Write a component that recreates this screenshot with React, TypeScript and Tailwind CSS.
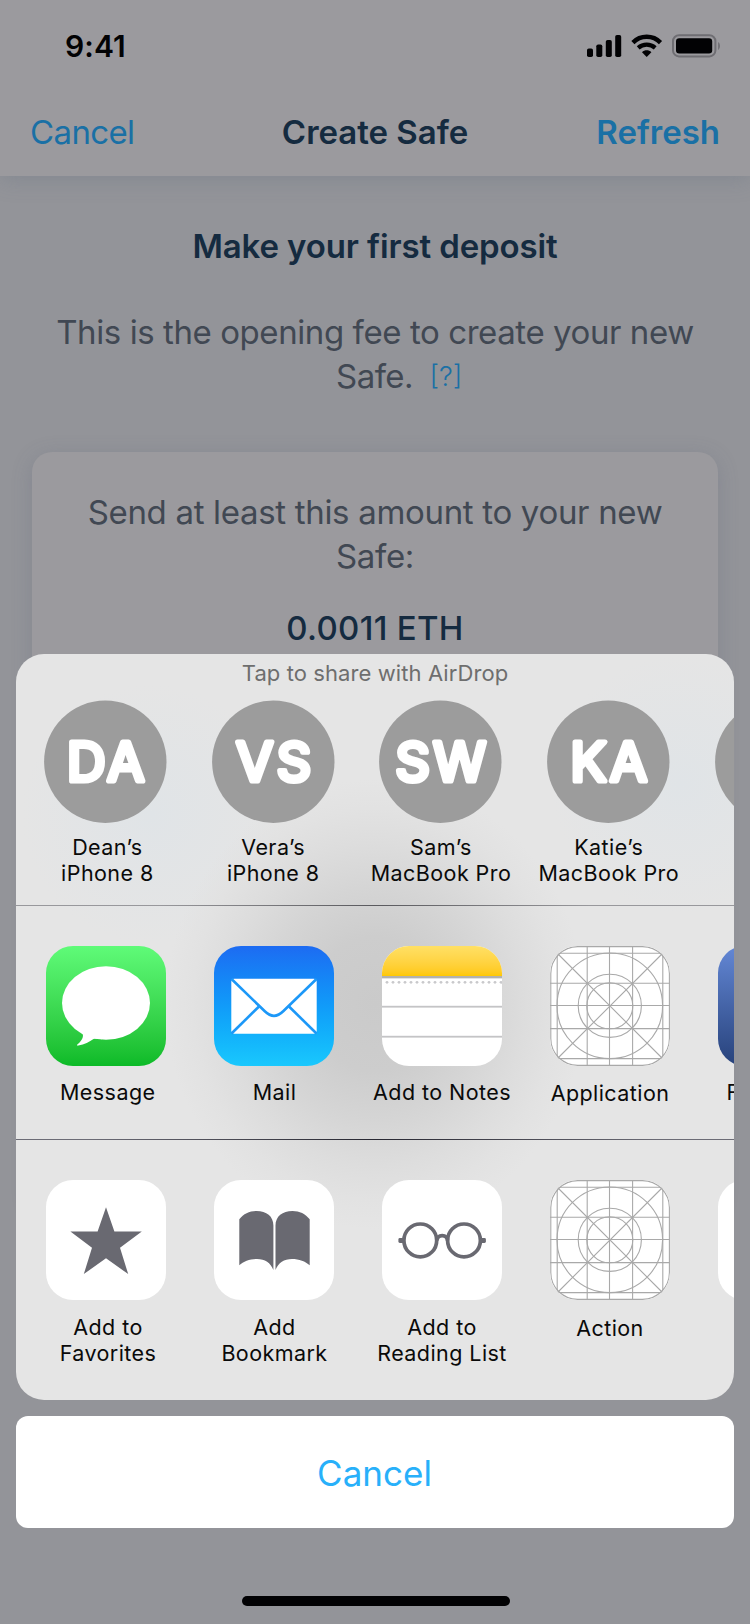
import type { ReactNode } from "react";

function StatusIcons() {
  return (
    <svg width="135" height="24" viewBox="0 0 135 24" fill="#020204">
      <rect x="1" y="14.5" width="6" height="8.5" rx="1.8" />
      <rect x="10.3" y="10.5" width="6" height="12.5" rx="1.8" />
      <rect x="19.8" y="6" width="6" height="17" rx="1.8" />
      <rect x="29.2" y="1" width="6" height="22" rx="1.8" />
      <g fill="none" stroke="#020204">
        <path d="M46.9 8.6A19.3 19.3 0 0 1 74.5 8.6" strokeWidth="4.4" />
        <path d="M52.2 13.8A12.9 12.9 0 0 1 69.2 13.8" strokeWidth="4.2" />
      </g>
      <path d="M56 18.2C58.6 15.7 62.8 15.7 65.4 18.2L60.7 22.9Z" />
      <rect x="87" y="1.2" width="42.4" height="21.2" rx="6" fill="none" stroke="#6f6e73" strokeWidth="2" />
      <rect x="90" y="4.3" width="36.2" height="15.2" rx="3.2" />
      <path d="M132 8C134.7 9.3 134.7 14.6 132 15.9Z" fill="#747378" />
    </svg>
  );
}

function MessageIcon() {
  return (
    <div className="size-[120px] rounded-[27px] bg-linear-to-b from-[#5ffb78] to-[#0bba27]">
      <svg viewBox="0 0 120 120" fill="#fff">
        <ellipse cx="60" cy="57" rx="44" ry="36.7" />
        <path d="M35 86C38.5 88.5 37.5 93.5 31.3 98.5C30.7 99.3 31.2 99.8 32.3 99.6C38.5 98.8 43.5 95.5 47.5 93C48.7 92.5 52 92.8 56 93.2L52 82Z" />
      </svg>
    </div>
  );
}

function MailIcon() {
  return (
    <div className="size-[120px] rounded-[27px] bg-linear-to-b from-[#1d6bf2] to-[#1ac8fd]">
      <svg viewBox="0 0 120 120">
        <rect x="17.3" y="32.7" width="85.4" height="55" rx="3" fill="#fff" />
        <g fill="none" stroke="#1c98f8" strokeWidth="2.6">
          <path d="M17.5 33L50.8 65.3Q60 74.3 69.2 65.3L102.5 33" />
          <path d="M17.5 87.5L45 60.5" />
          <path d="M102.5 87.5L75 60.5" />
        </g>
      </svg>
    </div>
  );
}

const notesDots = Array.from({ length: 20 }, (_, i) => 5 + i * 6);

function NotesIcon() {
  return (
    <div className="size-[120px] overflow-hidden rounded-[27px] bg-white">
      <div className="h-[30px] bg-linear-to-b from-[#ffe064] to-[#ffc800]" />
      <svg viewBox="0 0 120 90" className="block">
        <rect width="120" height="2" fill="#b3b2ad" />
        <rect y="2" width="120" height="1" fill="#e2e2e2" />
        {notesDots.map((x) => (
          <circle key={x} cx={x} cy="6.3" r="1.4" fill="#c9c9cc" />
        ))}
        <rect y="29.8" width="120" height="1.8" fill="#c4c4c6" />
        <rect y="59.8" width="120" height="1.8" fill="#c4c4c6" />
      </svg>
    </div>
  );
}

function TemplateIcon() {
  return (
    <div className="size-[120px] overflow-hidden rounded-[27px] bg-white">
      <svg viewBox="0 0 120 120" fill="none" stroke="#a9a9a9" strokeWidth="1.1">
        <rect x="0.8" y="0.6" width="118.6" height="118.8" rx="27" />
        <path d="M7.2 7V113M37.2 0V120M59.5 0V120M82.6 0V120M112.8 7V113" />
        <path d="M8 7.2H112M0 37.2H120M0 59.5H120M0 82.6H120M8 112.6H112" />
        <path d="M8 8L112 112M112 8L8 112" />
        <circle cx="59.8" cy="59.8" r="52.8" />
        <circle cx="59.8" cy="59.8" r="31.6" />
        <circle cx="59.8" cy="59.8" r="23" />
      </svg>
    </div>
  );
}

function FacebookIcon() {
  return <div className="size-[120px] rounded-[27px] bg-linear-to-b from-[#6488d6] to-[#27427b]" />;
}

function ActionTile({ children }: { children?: ReactNode }) {
  return (
    <div className="size-[120px] rounded-[27px] bg-white">
      <svg viewBox="0 0 120 120" fill="#696971">
        {children}
      </svg>
    </div>
  );
}

function Avatar({ initials }: { initials: string }) {
  return (
    <svg width="123" height="123" viewBox="0 0 123 123">
      <circle cx="61.3" cy="61.7" r="61.2" fill="#9c9c9c" />
      <text
        x="63.4"
        y="81.2"
        textAnchor="middle"
        fill="#fff"
        stroke="#fff"
        strokeWidth="5.2"
        strokeLinejoin="round"
        strokeLinecap="round"
        className="font-[Inter,sans-serif] text-[53.5px] font-normal tracking-[3.5px]"
      >
        {initials}
      </text>
    </svg>
  );
}

function Label({ lines }: { lines: string[] }) {
  return (
    <div className="text-center text-[21.5px] leading-[26px] tracking-[0.43px] whitespace-nowrap text-[#0a0a0a]">
      {lines.map((line) => (
        <div key={line}>{line}</div>
      ))}
    </div>
  );
}

const people = [
  { initials: "DA", lines: ["Dean’s", "iPhone 8"], nudge: "pl-[4px]" },
  { initials: "VS", lines: ["Vera’s", "iPhone 8"], nudge: "" },
  { initials: "SW", lines: ["Sam’s", "MacBook Pro"], nudge: "" },
  { initials: "KA", lines: ["Katie’s", "MacBook Pro"], nudge: "" },
  { initials: "", lines: [], nudge: "" },
];

const apps = [
  { icon: <MessageIcon />, label: "Message", nudge: "pl-[3.5px]" },
  { icon: <MailIcon />, label: "Mail", nudge: "pl-px" },
  { icon: <NotesIcon />, label: "Add to Notes", nudge: "" },
  { icon: <TemplateIcon />, label: "Application", nudge: "pt-px" },
  { icon: <FacebookIcon />, label: "Facebook", nudge: "" },
];

const actions = [
  {
    icon: (
      <ActionTile>
        <path d="M60 27.2L68.4 51.6H95.8L74 67.8L82.2 94.1L60 78.2L37.8 94.1L46 67.8L24.4 51.6H51.6Z" />
      </ActionTile>
    ),
    lines: ["Add to", "Favorites"],
    nudge: "pl-[4px]",
  },
  {
    icon: (
      <ActionTile>
        <path d="M25.3 39.3C29.5 33.6 35.5 30.9 42.5 30.9C52.5 30.9 59.4 36.1 59.4 45.6V89.9C56.5 82.6 51 78.9 43 78.9C36 78.9 29.5 81.2 25.3 85.3Z" />
        <path d="M95.7 39.3C91.5 33.6 85.5 30.9 78.5 30.9C68.5 30.9 61.5 36.1 61.5 45.6V89.9C64.4 82.6 70 78.9 78 78.9C85 78.9 91.5 81.2 95.7 85.3Z" />
      </ActionTile>
    ),
    lines: ["Add", "Bookmark"],
    nudge: "pl-px",
  },
  {
    icon: (
      <ActionTile>
        <g fill="none" stroke="#696971" strokeWidth="3.7">
          <circle cx="38.3" cy="60.4" r="16.4" />
          <circle cx="82" cy="60.4" r="16.4" />
          <path d="M54.8 60.6C55.2 57.1 57.2 55.6 60.2 55.6C63.2 55.6 65.2 57.1 65.5 60.6" />
        </g>
        <rect x="16.4" y="58" width="6.5" height="5" rx="1.4" />
        <rect x="97.4" y="58" width="6.5" height="5" rx="1.4" />
      </ActionTile>
    ),
    lines: ["Add to", "Reading List"],
    nudge: "",
  },
  { icon: <TemplateIcon />, lines: ["Action"], nudge: "pt-px" },
  { icon: <ActionTile />, lines: [], nudge: "" },
];

export default function App() {
  return (
    <div className="relative flex h-[1624px] w-[750px] flex-col overflow-hidden bg-[#939499] font-[Inter,sans-serif] text-[33px] leading-[44px]">
      <header className="bg-[#9b9a9e] shadow-[0_4px_20px_rgba(92,106,126,0.28)]">
        <div className="flex h-[88px] items-center justify-between pt-1 pr-[29px] pl-[65px]">
          <span className="text-[30px] font-semibold tracking-[0.1px] text-[#020204]">9:41</span>
          <StatusIcons />
        </div>
        <nav className="grid h-[88px] grid-cols-[1fr_auto_1fr] items-center pr-[30px] pl-[30px]">
          <span className="tracking-[-0.62px] text-[#1a70a5]">Cancel</span>
          <span className="font-semibold tracking-[-0.03px] text-[#152b40]">Create Safe</span>
          <span className="text-right font-semibold text-[#1a70a5]">Refresh</span>
        </nav>
      </header>

      <main className="flex flex-col px-8 pt-12 text-center text-[#414853]">
        <h1 className="font-semibold tracking-[-0.12px] text-[#152b40]">Make your first deposit</h1>
        <p className="mt-[42px] tracking-[-0.42px] whitespace-nowrap">This is the opening fee to create your new</p>
        <div className="flex h-11 justify-center gap-[16.5px] pl-[48.5px]">
          <span className="tracking-[-0.55px]">Safe.</span>
          <span className="text-[27.5px] leading-[45px] font-light text-[#1a70a5]">[?]</span>
        </div>
        <section className="mt-[54px] h-[760px] rounded-[20px] bg-[#9b9a9e] pt-[38px] shadow-[0_4px_20px_rgba(88,98,118,0.26)]">
          <p className="tracking-[-0.32px]">
            Send at least this amount to your new
            <br />
            Safe:
          </p>
          <p className="mt-7 font-medium tracking-[0.3px] text-[#152b40]">0.0011 ETH</p>
        </section>
      </main>

      <div className="absolute inset-x-4 top-[654px] flex flex-col">
        <div className="flex h-[746px] flex-col overflow-hidden rounded-[28px] bg-[#e5e5e5] bg-[radial-gradient(ellipse_210px_225px_at_359px_350px,#cacaca_0%,#cdcdcd_30%,#d5d5d5_52%,#dddddd_72%,#e2e2e2_87%,rgba(229,229,229,0)_100%),radial-gradient(circle_at_135px_160px,#e0e4e7_0,rgba(229,229,229,0)_130px),radial-gradient(circle_at_665px_130px,#e0e4e7_0,rgba(229,229,229,0)_130px)]">
          <p className="text-center text-[22px] leading-[38px] tracking-[0.09px] text-[#6e6e6e]">
            Tap to share with AirDrop
          </p>
          <div className="flex h-[213px] pt-2 pl-[5.5px]">
            {people.map((person, i) => (
              <div key={i} className="flex w-[167.8px] shrink-0 flex-col items-center gap-[11.4px]">
                <Avatar initials={person.initials} />
                <div className={person.nudge}>
                  <Label lines={person.lines} />
                </div>
              </div>
            ))}
          </div>
          <div className="h-px shrink-0 bg-linear-to-r from-[#98989c] from-20% via-[#5a5a5e] to-[#98989c] to-80%" />
          <div className="flex h-[233px] pt-10 pl-1.5">
            {apps.map((app) => (
              <div key={app.label} className="flex w-[168px] shrink-0 flex-col items-center gap-[13px]">
                {app.icon}
                <div className={app.nudge}>
                  <Label lines={[app.label]} />
                </div>
              </div>
            ))}
          </div>
          <div className="h-px shrink-0 bg-linear-to-r from-[#6c6c76] from-10% via-[#282832] to-[#6c6c76] to-90%" />
          <div className="flex h-[260px] pt-10 pl-1.5">
            {actions.map((action, i) => (
              <div key={i} className="flex w-[168px] shrink-0 flex-col items-center gap-[14px]">
                {action.icon}
                <div className={action.nudge}>
                  <Label lines={action.lines} />
                </div>
              </div>
            ))}
          </div>
        </div>
        <button className="mt-4 h-28 rounded-xl bg-white pt-0.5 pr-px text-[35px] text-[#28b0fa]">Cancel</button>
        <div className="ml-[226px] mt-[68px] h-2.5 w-[268px] rounded-full bg-[#020204]" />
      </div>
    </div>
  );
}
